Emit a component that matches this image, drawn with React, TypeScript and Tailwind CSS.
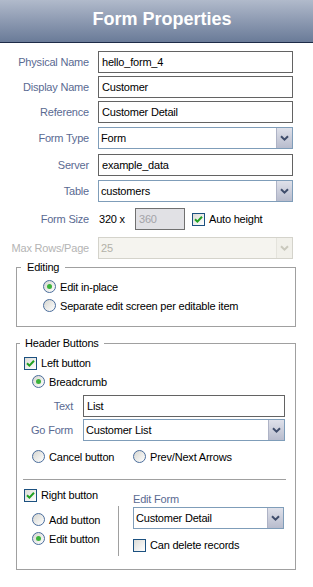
import React from 'react'

const labelCls = 'text-[#5a6a92]'

const TextBox = ({value, className = ''}: {value: string; className?: string}) => (
	<div className={`h-[22px] border border-[#636363] bg-white flex items-center pl-[3px] text-black ${className}`}>
		{value}
	</div>
)

const Arrow = ({disabled = false}: {disabled?: boolean}) => (
	<div
		className={`w-[16px] h-full flex items-center justify-center border-l ${
			disabled
				? 'bg-[#f1f0ea] border-[#e4e3dc]'
				: 'bg-gradient-to-b from-[#dfe1ea] to-[#b8bccd] border-[#aeb3c6]'
		}`}
	>
		<svg width="9" height="6" viewBox="0 0 9 6">
			<path d="M1 1.2 L4.5 4.6 L8 1.2" fill="none" stroke={disabled ? '#c9c8bd' : '#3f4d6b'} strokeWidth="2" />
		</svg>
	</div>
)

const SelectBox = ({value, className = '', disabled = false}: {value: string; className?: string; disabled?: boolean}) => (
	<div
		className={`h-[22px] border flex items-stretch ${
			disabled ? 'border-[#d4d3cb] bg-[#f5f4ef] text-[#b2b1a8]' : 'border-[#7f9db9] bg-white text-black'
		} ${className}`}
	>
		<div className="flex-1 flex items-center pl-[2px]">{value}</div>
		<Arrow disabled={disabled} />
	</div>
)

const Check = ({checked, label}: {checked: boolean; label: string}) => (
	<div className="flex items-center gap-[4px] h-[16px]">
		<div className="w-[13px] h-[13px] border border-[#1c5180] bg-gradient-to-br from-[#dcdcd7] to-white flex items-center justify-center">
			{checked && (
				<svg width="9" height="9" viewBox="0 0 9 9">
					<path d="M1 4.2 L3.4 6.6 L8 1.8" fill="none" stroke="#21a121" strokeWidth="2" />
				</svg>
			)}
		</div>
		<span className="text-black">{label}</span>
	</div>
)

const Radio = ({checked, label}: {checked: boolean; label: string}) => (
	<div className="flex items-center gap-[4px] h-[19px]">
		<div className="w-[13px] h-[13px] rounded-full border border-[#4a6d9c] bg-gradient-to-br from-[#d6d6d0] to-white flex items-center justify-center">
			{checked && <div className="w-[5px] h-[5px] rounded-full bg-[#3bb33b]" />}
		</div>
		<span className="text-black">{label}</span>
	</div>
)

const Row = ({label, children, className = '', muted = false}: {label: string; children: React.ReactNode; className?: string; muted?: boolean}) => (
	<div className={`flex items-center h-[22px] ${className}`}>
		<span className={`w-[89px] text-right mr-[9px] whitespace-nowrap ${muted ? 'text-[#b4b4b4]' : labelCls}`}>{label}</span>
		{children}
	</div>
)

export default function App() {
	return (
		<div className="w-[313px] h-[587px] bg-white font-['Liberation_Sans',Arial,sans-serif] text-[11px] tracking-[-0.2px] leading-[14px]">
			<div className="h-[43px] border-b border-[#1d2b47] bg-gradient-to-b from-[#b1bacb] to-[#6a7b98] flex items-center justify-center">
				<h1 className="text-white font-bold text-[18px] tracking-normal leading-none pl-[11px] -mt-[5px]">Form Properties</h1>
			</div>

			<Row label="Physical Name" className="mt-[8px]">
				<TextBox value="hello_form_4" className="w-[195px]" />
			</Row>
			<Row label="Display Name" className="mt-[3px]">
				<TextBox value="Customer" className="w-[195px]" />
			</Row>
			<Row label="Reference" className="mt-[3px]">
				<TextBox value="Customer Detail" className="w-[195px]" />
			</Row>
			<Row label="Form Type" className="mt-[4px]">
				<SelectBox value="Form" className="w-[195px]" />
			</Row>
			<Row label="Server" className="mt-[5px]">
				<TextBox value="example_data" className="w-[195px]" />
			</Row>
			<Row label="Table" className="mt-[4px]">
				<SelectBox value="customers" className="w-[195px]" />
			</Row>
			<Row label="Form Size" className="mt-[6px]">
				<span className="text-black pl-[1px] w-[37px]">320 x</span>
				<div className="h-[22px] w-[50px] border border-[#707070] bg-[#e1e1e5] text-[#a3a3a8] flex items-center pl-[3px]">360</div>
				<div className="ml-[7px]">
					<Check checked label="Auto height" />
				</div>
			</Row>
			<Row label="Max Rows/Page" muted className="mt-[7px]">
				<SelectBox value="25" disabled className="w-[195px]" />
			</Row>

			<fieldset className="ml-[16px] mt-[1px] w-[280px] border border-[#a0a0a0] pt-[3px] pb-[11px]">
				<legend className="ml-[4px] px-[6px] text-black leading-[14px]">Editing</legend>
				<div className="pl-[26px]">
					<Radio checked label="Edit in-place" />
					<Radio checked={false} label="Separate edit screen per editable item" />
				</div>
			</fieldset>

			<fieldset className="ml-[16px] mt-[9px] w-[280px] border border-[#a0a0a0] pt-[5px] pb-[13px]">
				<legend className="ml-[3px] px-[5px] text-black leading-[14px]">Header Buttons</legend>
				<div className="pl-[7px]">
					<Check checked label="Left button" />
				</div>
				<div className="pl-[15px] mt-[1px]">
					<Radio checked label="Breadcrumb" />
				</div>
				<div className="flex items-center h-[22px] mt-[4px]">
					<span className={`w-[56px] text-right mr-[10px] ${labelCls}`}>Text</span>
					<TextBox value="List" className="w-[202px]" />
				</div>
				<div className="flex items-center h-[22px] mt-[2px]">
					<span className={`w-[56px] text-right mr-[10px] ${labelCls}`}>Go Form</span>
					<SelectBox value="Customer List" className="w-[202px]" />
				</div>
				<div className="flex pl-[15px] mt-[6px]">
					<div className="w-[101px]">
						<Radio checked={false} label="Cancel button" />
					</div>
					<Radio checked={false} label="Prev/Next Arrows" />
				</div>
				<div className="ml-[6px] mr-[9px] mt-[13px] border-t border-[#a0a0a0]" />
				<div className="flex items-start mt-[7px]">
					<div className="w-[102px]">
						<div className="pl-[7px]">
							<Check checked label="Right button" />
						</div>
						<div className="mt-[3px] h-[50px] border-r border-[#a0a0a0] pl-[15px] pt-[4px]">
							<Radio checked={false} label="Add button" />
							<Radio checked label="Edit button" />
						</div>
					</div>
					<div className="ml-[14px]">
						<div className={`mt-[5px] ${labelCls}`}>Edit Form</div>
						<SelectBox value="Customer Detail" className="w-[151px] mt-[1px]" />
						<div className="mt-[8px]">
							<Check checked={false} label="Can delete records" />
						</div>
					</div>
				</div>
			</fieldset>
		</div>
	)
}
